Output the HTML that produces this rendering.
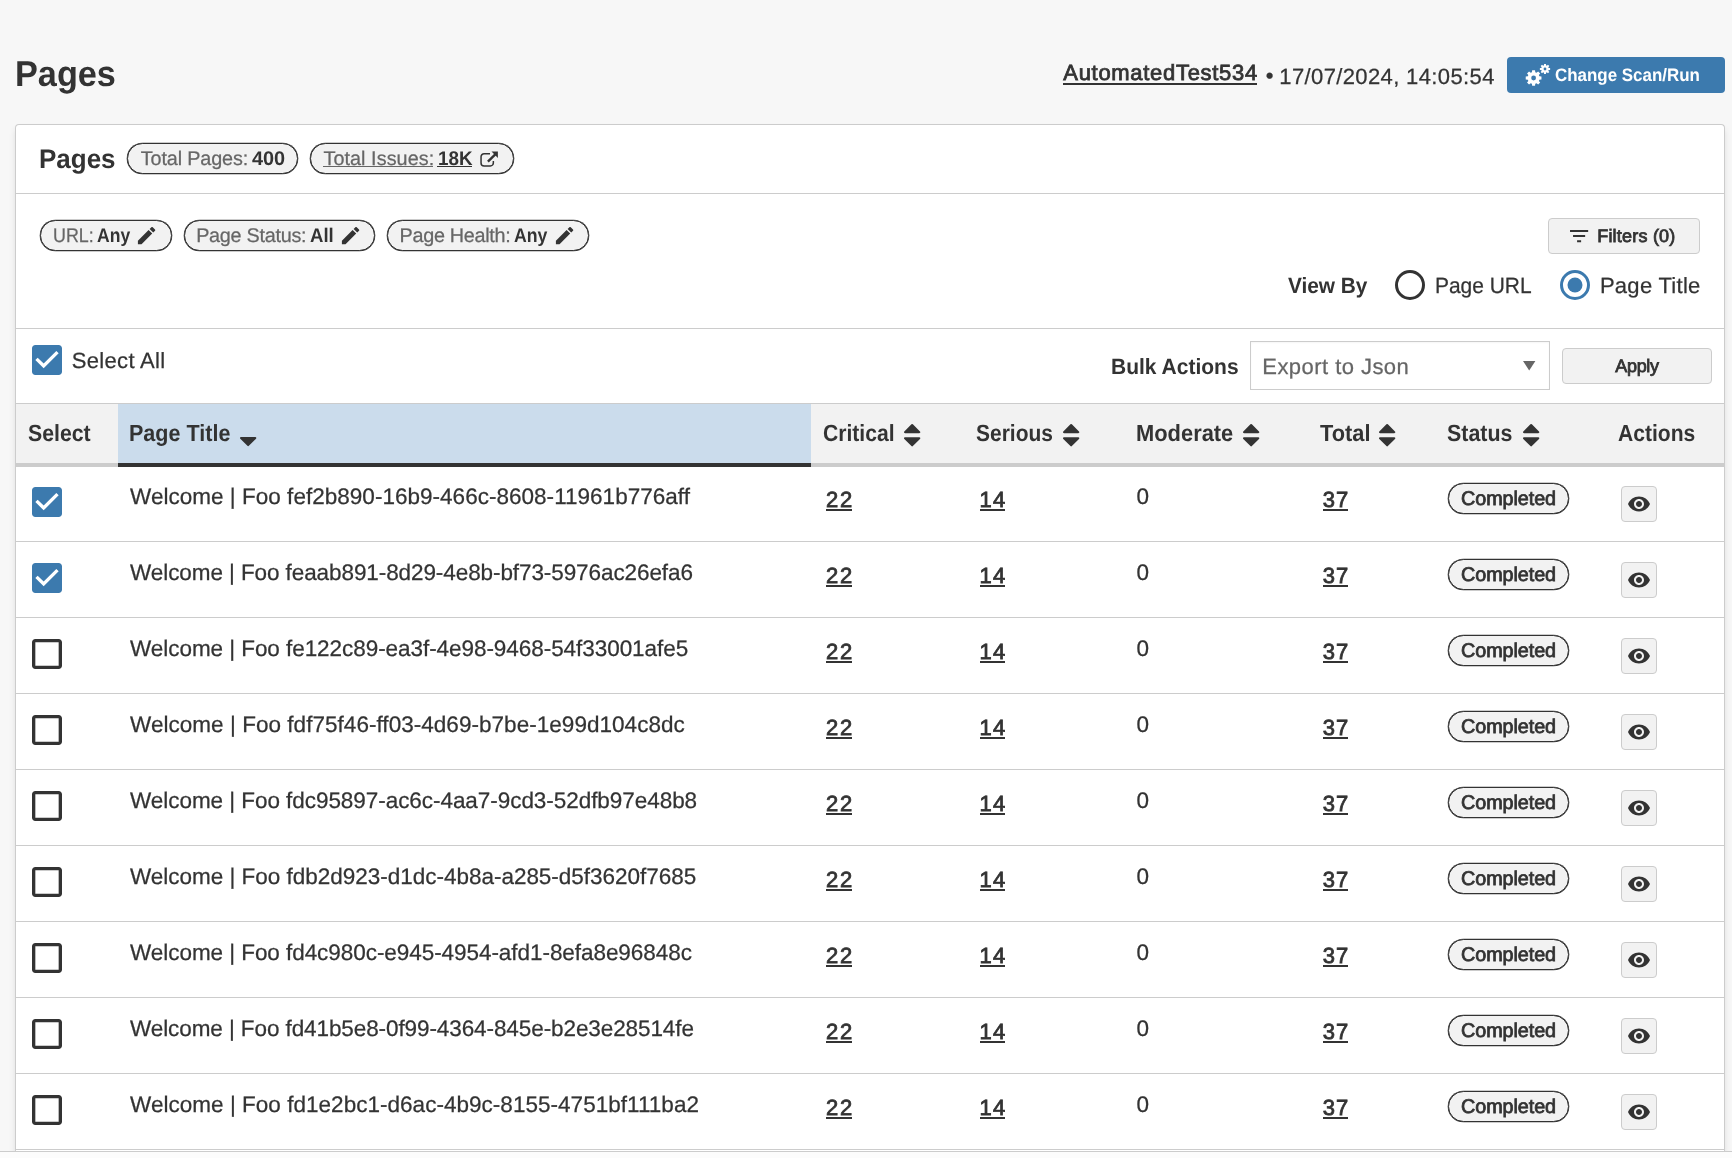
<!DOCTYPE html>
<html lang="en">
<head>
<meta charset="utf-8">
<title>Pages</title>
<style>
*{box-sizing:border-box;}
html,body{margin:0;padding:0;}
body{width:1732px;height:1158px;overflow:hidden;position:relative;background:#f7f7f7;color:#333;will-change:transform;text-rendering:geometricPrecision;
 font-family:"Liberation Sans",Arial,sans-serif;font-size:22px;}
.abs{position:absolute;white-space:nowrap;line-height:1;margin:0;font-weight:normal;-webkit-text-stroke:0.25px currentColor;}
.b{-webkit-text-stroke:0;}
.b{font-weight:bold;transform-origin:0 50%;}
.med{-webkit-text-stroke:0.8px currentColor;}
.ic{position:absolute;display:block;overflow:visible;}
.box{position:absolute;}
.ul{position:absolute;height:2px;background:#333;}
#changebtn{left:1507px;top:57px;width:218px;height:36px;background:#3c7aae;border-radius:4px;color:#fff;}
#card{position:absolute;left:15px;top:124px;width:1710px;height:1027px;background:#fff;border:1px solid #ccc;border-bottom:none;border-radius:4px 4px 0 0;
 box-shadow:0 5px 6px rgba(0,0,0,.10);}
.hr{position:absolute;left:0;right:0;height:1px;background:#ccc;}
.pill{position:absolute;height:31px;border:1px solid #333;border-radius:16px;background:#f2f2f2;box-shadow:0 0 0 .3px #333;}
.gbtn{position:absolute;background:#f2f2f2;border:1px solid #ccc;border-radius:4px;}
#thead{position:absolute;left:0;right:0;top:278px;height:64px;background:#f2f2f2;border-top:1px solid #ccc;border-bottom:4px solid #ccc;}
#thsort{position:absolute;left:102px;top:279px;width:693px;height:63px;background:#cbdcec;border-bottom:4px solid #333;}
.row{position:absolute;left:0;right:0;height:76px;border-bottom:1px solid #ccc;}
#foot{position:absolute;left:0;top:1151px;width:1732px;height:7px;background:#fcfcfc;border-top:1px solid #ccc;}
</style>
</head>
<body>

<h1 id="h1" class="abs b" style="left:14.74px;top:55.53px;font-size:36px;transform-origin:0 50%;transform:scaleX(0.9510);">Pages</h1>
<a id="runlink" class="abs med" style="left:1063.31px;top:61.88px;font-size:22px;letter-spacing:0.693px;">AutomatedTest534</a>
<div class="ul" style="left:1062.8px;top:83px;width:194.4px;"></div>
<span id="runbul" class="abs " style="left:1265.67px;top:65.08px;font-size:22px;">•</span>
<span id="rundate" class="abs " style="left:1279.33px;top:66.08px;font-size:22px;letter-spacing:0.372px;">17/07/2024, 14:05:54</span>
<div id="changebtn" class="box">
<svg class="ic" style="left:10px;top:0px;" width="36" height="36" viewBox="0 0 36 36"><path fill="#fff" fill-rule="evenodd" d="M22.36 19.33 L24.47 19.56 L24.47 22.44 L22.36 22.67 L21.86 23.89 L23.18 25.55 L21.15 27.58 L19.49 26.26 L18.27 26.76 L18.04 28.87 L15.16 28.87 L14.93 26.76 L13.71 26.26 L12.05 27.58 L10.02 25.55 L11.34 23.89 L10.84 22.67 L8.73 22.44 L8.73 19.56 L10.84 19.33 L11.34 18.11 L10.02 16.45 L12.05 14.42 L13.71 15.74 L14.93 15.24 L15.16 13.13 L18.04 13.13 L18.27 15.24 L19.49 15.74 L21.15 14.42 L23.18 16.45 L21.86 18.11Z M14.20 21.00 a2.40 2.40 0 1 0 4.80 0 a2.40 2.40 0 1 0 -4.80 0Z"/><path fill="#fff" fill-rule="evenodd" d="M31.65 10.94 L33.12 11.07 L33.12 12.93 L31.65 13.06 L31.33 13.83 L32.28 14.96 L30.96 16.28 L29.83 15.33 L29.06 15.65 L28.93 17.12 L27.07 17.12 L26.94 15.65 L26.17 15.33 L25.04 16.28 L23.72 14.96 L24.67 13.83 L24.35 13.06 L22.88 12.93 L22.88 11.07 L24.35 10.94 L24.67 10.17 L23.72 9.04 L25.04 7.72 L26.17 8.67 L26.94 8.35 L27.07 6.88 L28.93 6.88 L29.06 8.35 L29.83 8.67 L30.96 7.72 L32.28 9.04 L31.33 10.17Z M26.60 12.00 a1.40 1.40 0 1 0 2.80 0 a1.40 1.40 0 1 0 -2.80 0Z"/></svg>
<span id="chg" class="abs b" style="left:48.19px;top:9.46px;font-size:18px;transform-origin:0 50%;transform:scaleX(0.9410);color:#fff;">Change Scan/Run</span>
</div>
<div id="card">
<h2 id="h2" class="abs b" style="left:23.36px;top:21.24px;font-size:27px;transform-origin:0 50%;transform:scaleX(0.9620);">Pages</h2>
<div class="pill" style="left:111px;top:18px;width:171px;height:31px;"></div>
<span id="tp1" class="abs " style="left:124.82px;top:25.14px;font-size:19.8px;letter-spacing:-0.139px;color:#666;">Total Pages:</span>
<span id="tp2" class="abs b" style="left:236.25px;top:25.14px;font-size:19.8px;transform-origin:0 50%;transform:scaleX(1.0054);">400</span>
<div class="pill" style="left:294px;top:18px;width:204px;height:31px;"></div>
<span id="ti1" class="abs " style="left:307.45px;top:25.14px;font-size:19.8px;letter-spacing:0.068px;color:#666;">Total Issues:</span>
<span id="ti2" class="abs b" style="left:422.49px;top:25.14px;font-size:19.8px;transform-origin:0 50%;transform:scaleX(0.9510);">18K</span>
<div class="ul" style="left:307.2px;top:41.2px;width:109.6px;height:1.1px;background:#666;"></div>
<div class="ul" style="left:421.4px;top:41.2px;width:34.6px;height:1.1px;"></div>
<svg class="ic" style="left:463px;top:25px;" width="20" height="18" viewBox="0 0 20 18"><path d="M11 3.75H5.05a3 3 0 0 0-3 3V12.95a3 3 0 0 0 3 3H11.35a3 3 0 0 0 3-3V11" fill="none" stroke="#333" stroke-width="1.5"/><path d="M8.9 11.7L16.8 3.8" stroke="#333" stroke-width="2.4" fill="none"/><path d="M12.5 1.6H18.9V8z" fill="#333"/></svg>
<div class="hr" style="top:68px;"></div>
<div class="pill" style="left:24px;top:95px;width:132px;height:31px;"></div>
<span id="f1a" class="abs " style="left:37.28px;top:101.94px;font-size:19.8px;transform-origin:0 50%;transform:scaleX(0.9026);color:#666;">URL:</span>
<span id="f1b" class="abs b" style="left:80.54px;top:101.94px;font-size:19.8px;transform-origin:0 50%;transform:scaleX(0.8881);">Any</span>
<svg class="ic" style="left:119.30px;top:98.90px;" width="23.2" height="23.2" viewBox="0 0 24 24" ><path fill="#333" d="M3 17.25V21h3.75L17.81 9.94l-3.75-3.75L3 17.25zM20.71 7.04c.39-.39.39-1.02 0-1.41l-2.34-2.34c-.39-.39-1.02-.39-1.41 0l-1.83 1.83 3.75 3.75 1.83-1.83z"/></svg>
<div class="pill" style="left:168px;top:95px;width:191px;height:31px;"></div>
<span id="f2a" class="abs " style="left:180.14px;top:101.94px;font-size:19.8px;letter-spacing:-0.257px;color:#666;">Page Status:</span>
<span id="f2b" class="abs b" style="left:294.02px;top:101.94px;font-size:19.8px;transform-origin:0 50%;transform:scaleX(0.9379);">All</span>
<svg class="ic" style="left:322.80px;top:98.90px;" width="23.2" height="23.2" viewBox="0 0 24 24" ><path fill="#333" d="M3 17.25V21h3.75L17.81 9.94l-3.75-3.75L3 17.25zM20.71 7.04c.39-.39.39-1.02 0-1.41l-2.34-2.34c-.39-.39-1.02-.39-1.41 0l-1.83 1.83 3.75 3.75 1.83-1.83z"/></svg>
<div class="pill" style="left:371px;top:95px;width:202px;height:31px;"></div>
<span id="f3a" class="abs " style="left:383.61px;top:101.94px;font-size:19.8px;letter-spacing:-0.296px;color:#666;">Page Health:</span>
<span id="f3b" class="abs b" style="left:498.42px;top:101.94px;font-size:19.8px;transform-origin:0 50%;transform:scaleX(0.8953);">Any</span>
<svg class="ic" style="left:537.00px;top:98.90px;" width="23.2" height="23.2" viewBox="0 0 24 24" ><path fill="#333" d="M3 17.25V21h3.75L17.81 9.94l-3.75-3.75L3 17.25zM20.71 7.04c.39-.39.39-1.02 0-1.41l-2.34-2.34c-.39-.39-1.02-.39-1.41 0l-1.83 1.83 3.75 3.75 1.83-1.83z"/></svg>
<div class="gbtn" style="left:1532px;top:93px;width:152px;height:36px;"></div>
<svg class="ic" style="left:1551.00px;top:99.00px;" width="24.2" height="24.2" viewBox="0 0 24 24" ><path fill="#333" d="M10 18h4v-2h-4v2zM3 6v2h18V6H3zm3 7h12v-2H6v2z"/></svg>
<span id="fbtn" class="abs med" style="left:1581.20px;top:101.66px;font-size:18px;letter-spacing:0.211px;">Filters (0)</span>
<span id="vb" class="abs b" style="left:1272.30px;top:150.38px;font-size:22px;transform-origin:0 50%;transform:scaleX(0.9461);">View By</span>
<svg class="ic" style="left:1375.8px;top:141.9px;" width="36" height="36" viewBox="0 0 24 24"><circle cx="12" cy="12" r="9" fill="none" stroke="#333" stroke-width="2"/></svg>
<span id="r1" class="abs " style="left:1419.00px;top:150.38px;font-size:22px;transform-origin:0 50%;transform:scaleX(0.9519);">Page URL</span>
<svg class="ic" style="left:1541.1px;top:141.9px;" width="36" height="36" viewBox="0 0 24 24"><circle cx="12" cy="12" r="9" fill="none" stroke="#3c7aae" stroke-width="2"/><circle cx="12" cy="12" r="5" fill="#3c7aae"/></svg>
<span id="r2" class="abs " style="left:1583.90px;top:150.38px;font-size:22px;letter-spacing:0.284px;">Page Title</span>
<div class="hr" style="top:203px;"></div>
<svg class="ic" style="left:11.00px;top:215.00px;" width="40" height="40" viewBox="0 0 24 24" ><path fill="#3c7aae" d="M19 3H5c-1.11 0-2 .9-2 2v14c0 1.1.89 2 2 2h14c1.11 0 2-.9 2-2V5c0-1.1-.89-2-2-2zm-9 14l-5-5 1.41-1.41L10 14.17l7.59-7.59L19 8l-9 9z"/></svg>
<span id="sa" class="abs " style="left:55.80px;top:225.08px;font-size:22px;letter-spacing:0.313px;">Select All</span>
<span id="ba" class="abs b" style="left:1095.46px;top:231.18px;font-size:22px;transform-origin:0 50%;transform:scaleX(0.9545);">Bulk Actions</span>
<div class="box" style="left:1234px;top:216px;width:300px;height:49px;background:#fff;border:1px solid #ccc;box-shadow:inset 0 1px 2px rgba(0,0,0,.04);"></div>
<span id="sel" class="abs " style="left:1246.31px;top:231.18px;font-size:22px;letter-spacing:0.451px;color:#666;">Export to Json</span>
<svg class="ic" style="left:1506.9px;top:235.8px;" width="12.4" height="9.4" viewBox="0 0 12.4 9.4"><path d="M0 0H12.4L6.2 9.4z" fill="#666"/></svg>
<div class="gbtn" style="left:1546px;top:223px;width:150px;height:36px;"></div>
<span id="ap" class="abs med" style="left:1599.19px;top:231.76px;font-size:18px;letter-spacing:-0.284px;">Apply</span>
<div id="thead"></div><div id="thsort"></div>
<span id="th0" class="abs b" style="left:11.77px;top:296.99px;font-size:23.4px;transform-origin:0 50%;transform:scaleX(0.9098);">Select</span>
<span id="th1" class="abs b" style="left:113.13px;top:296.99px;font-size:23.4px;transform-origin:0 50%;transform:scaleX(0.9209);">Page Title</span>
<svg class="ic" style="left:223.7px;top:311.6px;" width="16.3" height="9.16875" viewBox="0 1024 1024 576"><path fill="#333" d="M1024 1088q0 26-19 45l-448 448q-19 19-45 19t-45-19l-448-448q-19-19-19-45t19-45 45-19h896q26 0 45 19t19 45z"/></svg>
<span id="th2" class="abs b" style="left:806.62px;top:296.99px;font-size:23.4px;transform-origin:0 50%;transform:scaleX(0.9022);">Critical</span>
<svg class="ic" style="left:887.9px;top:298.8px;" width="16.3" height="22.4125" viewBox="0 192 1024 1408"><path fill="#333" d="M1024 704q0 26-19 45t-45 19h-896q-26 0-45-19t-19-45 19-45l448-448q19-19 45-19t45 19l448 448q19 19 19 45z"/><path fill="#333" d="M1024 1088q0 26-19 45l-448 448q-19 19-45 19t-45-19l-448-448q-19-19-19-45t19-45 45-19h896q26 0 45 19t19 45z"/></svg>
<span id="th3" class="abs b" style="left:960.00px;top:296.99px;font-size:23.4px;transform-origin:0 50%;transform:scaleX(0.8964);">Serious</span>
<svg class="ic" style="left:1046.8px;top:298.8px;" width="16.3" height="22.4125" viewBox="0 192 1024 1408"><path fill="#333" d="M1024 704q0 26-19 45t-45 19h-896q-26 0-45-19t-19-45 19-45l448-448q19-19 45-19t45 19l448 448q19 19 19 45z"/><path fill="#333" d="M1024 1088q0 26-19 45l-448 448q-19 19-45 19t-45-19l-448-448q-19-19-19-45t19-45 45-19h896q26 0 45 19t19 45z"/></svg>
<span id="th4" class="abs b" style="left:1120.39px;top:296.99px;font-size:23.4px;transform-origin:0 50%;transform:scaleX(0.9357);">Moderate</span>
<svg class="ic" style="left:1226.6px;top:298.8px;" width="16.3" height="22.4125" viewBox="0 192 1024 1408"><path fill="#333" d="M1024 704q0 26-19 45t-45 19h-896q-26 0-45-19t-19-45 19-45l448-448q19-19 45-19t45 19l448 448q19 19 19 45z"/><path fill="#333" d="M1024 1088q0 26-19 45l-448 448q-19 19-45 19t-45-19l-448-448q-19-19-19-45t19-45 45-19h896q26 0 45 19t19 45z"/></svg>
<span id="th5" class="abs b" style="left:1303.82px;top:296.99px;font-size:23.4px;transform-origin:0 50%;transform:scaleX(0.9320);">Total</span>
<svg class="ic" style="left:1362.9px;top:298.8px;" width="16.3" height="22.4125" viewBox="0 192 1024 1408"><path fill="#333" d="M1024 704q0 26-19 45t-45 19h-896q-26 0-45-19t-19-45 19-45l448-448q19-19 45-19t45 19l448 448q19 19 19 45z"/><path fill="#333" d="M1024 1088q0 26-19 45l-448 448q-19 19-45 19t-45-19l-448-448q-19-19-19-45t19-45 45-19h896q26 0 45 19t19 45z"/></svg>
<span id="th6" class="abs b" style="left:1431.38px;top:296.99px;font-size:23.4px;transform-origin:0 50%;transform:scaleX(0.9153);">Status</span>
<svg class="ic" style="left:1507px;top:298.8px;" width="16.3" height="22.4125" viewBox="0 192 1024 1408"><path fill="#333" d="M1024 704q0 26-19 45t-45 19h-896q-26 0-45-19t-19-45 19-45l448-448q19-19 45-19t45 19l448 448q19 19 19 45z"/><path fill="#333" d="M1024 1088q0 26-19 45l-448 448q-19 19-45 19t-45-19l-448-448q-19-19-19-45t19-45 45-19h896q26 0 45 19t19 45z"/></svg>
<span id="th7" class="abs b" style="left:1601.89px;top:296.99px;font-size:23.4px;transform-origin:0 50%;transform:scaleX(0.9005);">Actions</span>
<div class="row" style="top:341px;">
<svg class="ic" style="left:11.00px;top:16.00px;" width="40" height="40" viewBox="0 0 24 24" ><path fill="#3c7aae" d="M19 3H5c-1.11 0-2 .9-2 2v14c0 1.1.89 2 2 2h14c1.11 0 2-.9 2-2V5c0-1.1-.89-2-2-2zm-9 14l-5-5 1.41-1.41L10 14.17l7.59-7.59L19 8l-9 9z"/></svg>
<span id="t0" class="abs " style="left:114.06px;top:19.95px;font-size:22.5px;letter-spacing:0.024px;">Welcome | Foo fef2b890-16b9-466c-8608-11961b776aff</span>
<a id="c0" class="abs med" style="left:809.95px;top:23.08px;font-size:22px;letter-spacing:1.715px;">22</a>
<div class="ul" style="left:810.2px;top:43.3px;width:25.8px;"></div>
<a id="s0" class="abs med" style="left:963.50px;top:23.08px;font-size:22px;letter-spacing:1.190px;">14</a>
<div class="ul" style="left:963.9px;top:43.3px;width:25.4px;"></div>
<span id="m0" class="abs " style="left:1120.56px;top:19.95px;font-size:22.5px;">0</span>
<a id="o0" class="abs med" style="left:1306.72px;top:23.08px;font-size:22px;letter-spacing:1.163px;">37</a>
<div class="ul" style="left:1306.5px;top:43.3px;width:25.4px;"></div>
<div class="pill" style="left:1432px;top:17px;width:121px;height:31px;"></div>
<span id="p0" class="abs med" style="left:1444.99px;top:23.94px;font-size:19.8px;letter-spacing:-0.072px;">Completed</span>
<div class="gbtn" style="left:1605px;top:20px;width:36px;height:36px;"></div>
<svg class="ic" style="left:1611.00px;top:26.00px;" width="24" height="24" viewBox="0 0 24 24" ><path fill="#333" d="M12 4.5C7 4.5 2.73 7.61 1 12c1.73 4.39 6 7.5 11 7.5s9.27-3.11 11-7.5c-1.73-4.39-6-7.5-11-7.5zM12 17c-2.76 0-5-2.24-5-5s2.24-5 5-5 5 2.24 5 5-2.24 5-5 5zm0-8c-1.66 0-3 1.34-3 3s1.34 3 3 3 3-1.34 3-3-1.34-3-3-3z"/></svg>
</div>
<div class="row" style="top:417px;">
<svg class="ic" style="left:11.00px;top:16.00px;" width="40" height="40" viewBox="0 0 24 24" ><path fill="#3c7aae" d="M19 3H5c-1.11 0-2 .9-2 2v14c0 1.1.89 2 2 2h14c1.11 0 2-.9 2-2V5c0-1.1-.89-2-2-2zm-9 14l-5-5 1.41-1.41L10 14.17l7.59-7.59L19 8l-9 9z"/></svg>
<span id="t1" class="abs " style="left:114.06px;top:19.95px;font-size:22.5px;letter-spacing:-0.085px;">Welcome | Foo feaab891-8d29-4e8b-bf73-5976ac26efa6</span>
<a id="c1" class="abs med" style="left:809.95px;top:23.08px;font-size:22px;letter-spacing:1.715px;">22</a>
<div class="ul" style="left:810.2px;top:43.3px;width:25.8px;"></div>
<a id="s1" class="abs med" style="left:963.50px;top:23.08px;font-size:22px;letter-spacing:1.190px;">14</a>
<div class="ul" style="left:963.9px;top:43.3px;width:25.4px;"></div>
<span id="m1" class="abs " style="left:1120.56px;top:19.95px;font-size:22.5px;">0</span>
<a id="o1" class="abs med" style="left:1306.72px;top:23.08px;font-size:22px;letter-spacing:1.163px;">37</a>
<div class="ul" style="left:1306.5px;top:43.3px;width:25.4px;"></div>
<div class="pill" style="left:1432px;top:17px;width:121px;height:31px;"></div>
<span id="p1" class="abs med" style="left:1444.99px;top:23.94px;font-size:19.8px;letter-spacing:-0.072px;">Completed</span>
<div class="gbtn" style="left:1605px;top:20px;width:36px;height:36px;"></div>
<svg class="ic" style="left:1611.00px;top:26.00px;" width="24" height="24" viewBox="0 0 24 24" ><path fill="#333" d="M12 4.5C7 4.5 2.73 7.61 1 12c1.73 4.39 6 7.5 11 7.5s9.27-3.11 11-7.5c-1.73-4.39-6-7.5-11-7.5zM12 17c-2.76 0-5-2.24-5-5s2.24-5 5-5 5 2.24 5 5-2.24 5-5 5zm0-8c-1.66 0-3 1.34-3 3s1.34 3 3 3 3-1.34 3-3-1.34-3-3-3z"/></svg>
</div>
<div class="row" style="top:493px;">
<svg class="ic" style="left:11.00px;top:16.00px;" width="40" height="40" viewBox="0 0 24 24" ><path fill="#333" d="M19 5v14H5V5h14m0-2H5c-1.1 0-2 .9-2 2v14c0 1.1.9 2 2 2h14c1.1 0 2-.9 2-2V5c0-1.1-.9-2-2-2z"/></svg>
<span id="t2" class="abs " style="left:114.06px;top:19.95px;font-size:22.5px;letter-spacing:-0.055px;">Welcome | Foo fe122c89-ea3f-4e98-9468-54f33001afe5</span>
<a id="c2" class="abs med" style="left:809.95px;top:23.08px;font-size:22px;letter-spacing:1.715px;">22</a>
<div class="ul" style="left:810.2px;top:43.3px;width:25.8px;"></div>
<a id="s2" class="abs med" style="left:963.50px;top:23.08px;font-size:22px;letter-spacing:1.190px;">14</a>
<div class="ul" style="left:963.9px;top:43.3px;width:25.4px;"></div>
<span id="m2" class="abs " style="left:1120.56px;top:19.95px;font-size:22.5px;">0</span>
<a id="o2" class="abs med" style="left:1306.72px;top:23.08px;font-size:22px;letter-spacing:1.163px;">37</a>
<div class="ul" style="left:1306.5px;top:43.3px;width:25.4px;"></div>
<div class="pill" style="left:1432px;top:17px;width:121px;height:31px;"></div>
<span id="p2" class="abs med" style="left:1444.99px;top:23.94px;font-size:19.8px;letter-spacing:-0.072px;">Completed</span>
<div class="gbtn" style="left:1605px;top:20px;width:36px;height:36px;"></div>
<svg class="ic" style="left:1611.00px;top:26.00px;" width="24" height="24" viewBox="0 0 24 24" ><path fill="#333" d="M12 4.5C7 4.5 2.73 7.61 1 12c1.73 4.39 6 7.5 11 7.5s9.27-3.11 11-7.5c-1.73-4.39-6-7.5-11-7.5zM12 17c-2.76 0-5-2.24-5-5s2.24-5 5-5 5 2.24 5 5-2.24 5-5 5zm0-8c-1.66 0-3 1.34-3 3s1.34 3 3 3 3-1.34 3-3-1.34-3-3-3z"/></svg>
</div>
<div class="row" style="top:569px;">
<svg class="ic" style="left:11.00px;top:16.00px;" width="40" height="40" viewBox="0 0 24 24" ><path fill="#333" d="M19 5v14H5V5h14m0-2H5c-1.1 0-2 .9-2 2v14c0 1.1.9 2 2 2h14c1.1 0 2-.9 2-2V5c0-1.1-.9-2-2-2z"/></svg>
<span id="t3" class="abs " style="left:114.06px;top:19.95px;font-size:22.5px;letter-spacing:0.038px;">Welcome | Foo fdf75f46-ff03-4d69-b7be-1e99d104c8dc</span>
<a id="c3" class="abs med" style="left:809.95px;top:23.08px;font-size:22px;letter-spacing:1.715px;">22</a>
<div class="ul" style="left:810.2px;top:43.3px;width:25.8px;"></div>
<a id="s3" class="abs med" style="left:963.50px;top:23.08px;font-size:22px;letter-spacing:1.190px;">14</a>
<div class="ul" style="left:963.9px;top:43.3px;width:25.4px;"></div>
<span id="m3" class="abs " style="left:1120.56px;top:19.95px;font-size:22.5px;">0</span>
<a id="o3" class="abs med" style="left:1306.72px;top:23.08px;font-size:22px;letter-spacing:1.163px;">37</a>
<div class="ul" style="left:1306.5px;top:43.3px;width:25.4px;"></div>
<div class="pill" style="left:1432px;top:17px;width:121px;height:31px;"></div>
<span id="p3" class="abs med" style="left:1444.99px;top:23.94px;font-size:19.8px;letter-spacing:-0.072px;">Completed</span>
<div class="gbtn" style="left:1605px;top:20px;width:36px;height:36px;"></div>
<svg class="ic" style="left:1611.00px;top:26.00px;" width="24" height="24" viewBox="0 0 24 24" ><path fill="#333" d="M12 4.5C7 4.5 2.73 7.61 1 12c1.73 4.39 6 7.5 11 7.5s9.27-3.11 11-7.5c-1.73-4.39-6-7.5-11-7.5zM12 17c-2.76 0-5-2.24-5-5s2.24-5 5-5 5 2.24 5 5-2.24 5-5 5zm0-8c-1.66 0-3 1.34-3 3s1.34 3 3 3 3-1.34 3-3-1.34-3-3-3z"/></svg>
</div>
<div class="row" style="top:645px;">
<svg class="ic" style="left:11.00px;top:16.00px;" width="40" height="40" viewBox="0 0 24 24" ><path fill="#333" d="M19 5v14H5V5h14m0-2H5c-1.1 0-2 .9-2 2v14c0 1.1.9 2 2 2h14c1.1 0 2-.9 2-2V5c0-1.1-.9-2-2-2z"/></svg>
<span id="t4" class="abs " style="left:114.06px;top:19.95px;font-size:22.5px;letter-spacing:-0.051px;">Welcome | Foo fdc95897-ac6c-4aa7-9cd3-52dfb97e48b8</span>
<a id="c4" class="abs med" style="left:809.95px;top:23.08px;font-size:22px;letter-spacing:1.715px;">22</a>
<div class="ul" style="left:810.2px;top:43.3px;width:25.8px;"></div>
<a id="s4" class="abs med" style="left:963.50px;top:23.08px;font-size:22px;letter-spacing:1.190px;">14</a>
<div class="ul" style="left:963.9px;top:43.3px;width:25.4px;"></div>
<span id="m4" class="abs " style="left:1120.56px;top:19.95px;font-size:22.5px;">0</span>
<a id="o4" class="abs med" style="left:1306.72px;top:23.08px;font-size:22px;letter-spacing:1.163px;">37</a>
<div class="ul" style="left:1306.5px;top:43.3px;width:25.4px;"></div>
<div class="pill" style="left:1432px;top:17px;width:121px;height:31px;"></div>
<span id="p4" class="abs med" style="left:1444.99px;top:23.94px;font-size:19.8px;letter-spacing:-0.072px;">Completed</span>
<div class="gbtn" style="left:1605px;top:20px;width:36px;height:36px;"></div>
<svg class="ic" style="left:1611.00px;top:26.00px;" width="24" height="24" viewBox="0 0 24 24" ><path fill="#333" d="M12 4.5C7 4.5 2.73 7.61 1 12c1.73 4.39 6 7.5 11 7.5s9.27-3.11 11-7.5c-1.73-4.39-6-7.5-11-7.5zM12 17c-2.76 0-5-2.24-5-5s2.24-5 5-5 5 2.24 5 5-2.24 5-5 5zm0-8c-1.66 0-3 1.34-3 3s1.34 3 3 3 3-1.34 3-3-1.34-3-3-3z"/></svg>
</div>
<div class="row" style="top:721px;">
<svg class="ic" style="left:11.00px;top:16.00px;" width="40" height="40" viewBox="0 0 24 24" ><path fill="#333" d="M19 5v14H5V5h14m0-2H5c-1.1 0-2 .9-2 2v14c0 1.1.9 2 2 2h14c1.1 0 2-.9 2-2V5c0-1.1-.9-2-2-2z"/></svg>
<span id="t5" class="abs " style="left:114.06px;top:19.95px;font-size:22.5px;letter-spacing:-0.017px;">Welcome | Foo fdb2d923-d1dc-4b8a-a285-d5f3620f7685</span>
<a id="c5" class="abs med" style="left:809.95px;top:23.08px;font-size:22px;letter-spacing:1.715px;">22</a>
<div class="ul" style="left:810.2px;top:43.3px;width:25.8px;"></div>
<a id="s5" class="abs med" style="left:963.50px;top:23.08px;font-size:22px;letter-spacing:1.190px;">14</a>
<div class="ul" style="left:963.9px;top:43.3px;width:25.4px;"></div>
<span id="m5" class="abs " style="left:1120.56px;top:19.95px;font-size:22.5px;">0</span>
<a id="o5" class="abs med" style="left:1306.72px;top:23.08px;font-size:22px;letter-spacing:1.163px;">37</a>
<div class="ul" style="left:1306.5px;top:43.3px;width:25.4px;"></div>
<div class="pill" style="left:1432px;top:17px;width:121px;height:31px;"></div>
<span id="p5" class="abs med" style="left:1444.99px;top:23.94px;font-size:19.8px;letter-spacing:-0.072px;">Completed</span>
<div class="gbtn" style="left:1605px;top:20px;width:36px;height:36px;"></div>
<svg class="ic" style="left:1611.00px;top:26.00px;" width="24" height="24" viewBox="0 0 24 24" ><path fill="#333" d="M12 4.5C7 4.5 2.73 7.61 1 12c1.73 4.39 6 7.5 11 7.5s9.27-3.11 11-7.5c-1.73-4.39-6-7.5-11-7.5zM12 17c-2.76 0-5-2.24-5-5s2.24-5 5-5 5 2.24 5 5-2.24 5-5 5zm0-8c-1.66 0-3 1.34-3 3s1.34 3 3 3 3-1.34 3-3-1.34-3-3-3z"/></svg>
</div>
<div class="row" style="top:797px;">
<svg class="ic" style="left:11.00px;top:16.00px;" width="40" height="40" viewBox="0 0 24 24" ><path fill="#333" d="M19 5v14H5V5h14m0-2H5c-1.1 0-2 .9-2 2v14c0 1.1.9 2 2 2h14c1.1 0 2-.9 2-2V5c0-1.1-.9-2-2-2z"/></svg>
<span id="t6" class="abs " style="left:114.06px;top:19.95px;font-size:22.5px;letter-spacing:-0.055px;">Welcome | Foo fd4c980c-e945-4954-afd1-8efa8e96848c</span>
<a id="c6" class="abs med" style="left:809.95px;top:23.08px;font-size:22px;letter-spacing:1.715px;">22</a>
<div class="ul" style="left:810.2px;top:43.3px;width:25.8px;"></div>
<a id="s6" class="abs med" style="left:963.50px;top:23.08px;font-size:22px;letter-spacing:1.190px;">14</a>
<div class="ul" style="left:963.9px;top:43.3px;width:25.4px;"></div>
<span id="m6" class="abs " style="left:1120.56px;top:19.95px;font-size:22.5px;">0</span>
<a id="o6" class="abs med" style="left:1306.72px;top:23.08px;font-size:22px;letter-spacing:1.163px;">37</a>
<div class="ul" style="left:1306.5px;top:43.3px;width:25.4px;"></div>
<div class="pill" style="left:1432px;top:17px;width:121px;height:31px;"></div>
<span id="p6" class="abs med" style="left:1444.99px;top:23.94px;font-size:19.8px;letter-spacing:-0.072px;">Completed</span>
<div class="gbtn" style="left:1605px;top:20px;width:36px;height:36px;"></div>
<svg class="ic" style="left:1611.00px;top:26.00px;" width="24" height="24" viewBox="0 0 24 24" ><path fill="#333" d="M12 4.5C7 4.5 2.73 7.61 1 12c1.73 4.39 6 7.5 11 7.5s9.27-3.11 11-7.5c-1.73-4.39-6-7.5-11-7.5zM12 17c-2.76 0-5-2.24-5-5s2.24-5 5-5 5 2.24 5 5-2.24 5-5 5zm0-8c-1.66 0-3 1.34-3 3s1.34 3 3 3 3-1.34 3-3-1.34-3-3-3z"/></svg>
</div>
<div class="row" style="top:873px;">
<svg class="ic" style="left:11.00px;top:16.00px;" width="40" height="40" viewBox="0 0 24 24" ><path fill="#333" d="M19 5v14H5V5h14m0-2H5c-1.1 0-2 .9-2 2v14c0 1.1.9 2 2 2h14c1.1 0 2-.9 2-2V5c0-1.1-.9-2-2-2z"/></svg>
<span id="t7" class="abs " style="left:114.06px;top:19.95px;font-size:22.5px;letter-spacing:-0.091px;">Welcome | Foo fd41b5e8-0f99-4364-845e-b2e3e28514fe</span>
<a id="c7" class="abs med" style="left:809.95px;top:23.08px;font-size:22px;letter-spacing:1.715px;">22</a>
<div class="ul" style="left:810.2px;top:43.3px;width:25.8px;"></div>
<a id="s7" class="abs med" style="left:963.50px;top:23.08px;font-size:22px;letter-spacing:1.190px;">14</a>
<div class="ul" style="left:963.9px;top:43.3px;width:25.4px;"></div>
<span id="m7" class="abs " style="left:1120.56px;top:19.95px;font-size:22.5px;">0</span>
<a id="o7" class="abs med" style="left:1306.72px;top:23.08px;font-size:22px;letter-spacing:1.163px;">37</a>
<div class="ul" style="left:1306.5px;top:43.3px;width:25.4px;"></div>
<div class="pill" style="left:1432px;top:17px;width:121px;height:31px;"></div>
<span id="p7" class="abs med" style="left:1444.99px;top:23.94px;font-size:19.8px;letter-spacing:-0.072px;">Completed</span>
<div class="gbtn" style="left:1605px;top:20px;width:36px;height:36px;"></div>
<svg class="ic" style="left:1611.00px;top:26.00px;" width="24" height="24" viewBox="0 0 24 24" ><path fill="#333" d="M12 4.5C7 4.5 2.73 7.61 1 12c1.73 4.39 6 7.5 11 7.5s9.27-3.11 11-7.5c-1.73-4.39-6-7.5-11-7.5zM12 17c-2.76 0-5-2.24-5-5s2.24-5 5-5 5 2.24 5 5-2.24 5-5 5zm0-8c-1.66 0-3 1.34-3 3s1.34 3 3 3 3-1.34 3-3-1.34-3-3-3z"/></svg>
</div>
<div class="row" style="top:949px;">
<svg class="ic" style="left:11.00px;top:16.00px;" width="40" height="40" viewBox="0 0 24 24" ><path fill="#333" d="M19 5v14H5V5h14m0-2H5c-1.1 0-2 .9-2 2v14c0 1.1.9 2 2 2h14c1.1 0 2-.9 2-2V5c0-1.1-.9-2-2-2z"/></svg>
<span id="t8" class="abs " style="left:114.06px;top:19.95px;font-size:22.5px;letter-spacing:0.029px;">Welcome | Foo fd1e2bc1-d6ac-4b9c-8155-4751bf111ba2</span>
<a id="c8" class="abs med" style="left:809.95px;top:23.08px;font-size:22px;letter-spacing:1.715px;">22</a>
<div class="ul" style="left:810.2px;top:43.3px;width:25.8px;"></div>
<a id="s8" class="abs med" style="left:963.50px;top:23.08px;font-size:22px;letter-spacing:1.190px;">14</a>
<div class="ul" style="left:963.9px;top:43.3px;width:25.4px;"></div>
<span id="m8" class="abs " style="left:1120.56px;top:19.95px;font-size:22.5px;">0</span>
<a id="o8" class="abs med" style="left:1306.72px;top:23.08px;font-size:22px;letter-spacing:1.163px;">37</a>
<div class="ul" style="left:1306.5px;top:43.3px;width:25.4px;"></div>
<div class="pill" style="left:1432px;top:17px;width:121px;height:31px;"></div>
<span id="p8" class="abs med" style="left:1444.99px;top:23.94px;font-size:19.8px;letter-spacing:-0.072px;">Completed</span>
<div class="gbtn" style="left:1605px;top:20px;width:36px;height:36px;"></div>
<svg class="ic" style="left:1611.00px;top:26.00px;" width="24" height="24" viewBox="0 0 24 24" ><path fill="#333" d="M12 4.5C7 4.5 2.73 7.61 1 12c1.73 4.39 6 7.5 11 7.5s9.27-3.11 11-7.5c-1.73-4.39-6-7.5-11-7.5zM12 17c-2.76 0-5-2.24-5-5s2.24-5 5-5 5 2.24 5 5-2.24 5-5 5zm0-8c-1.66 0-3 1.34-3 3s1.34 3 3 3 3-1.34 3-3-1.34-3-3-3z"/></svg>
</div>
</div>
<div id="foot"></div>
</body></html>
